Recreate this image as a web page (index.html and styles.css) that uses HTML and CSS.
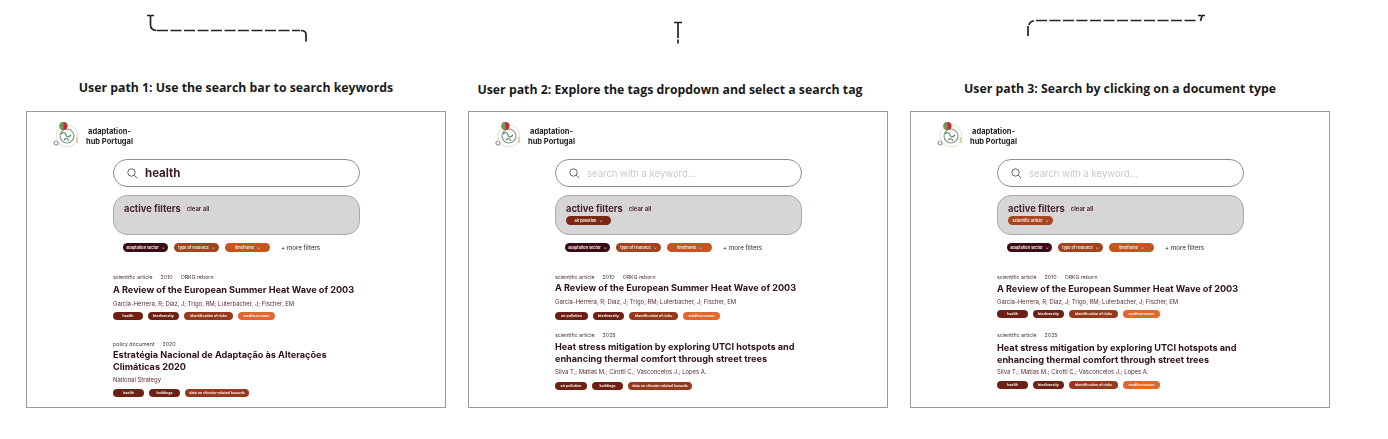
FILE: index.html
```html
<!DOCTYPE html>
<html lang="en">
<head>
  <meta charset="utf-8">
  <title>User paths</title>
  <link rel="stylesheet" href="styles.css">
</head>
<body>
  <svg class="connectors" width="1388" height="52" viewBox="0 0 1388 52">
    <g fill="none" stroke="#222" stroke-width="1.700">
      <path d="M147 15.500h7M150.500 16v9q0 5 6 5.500"/>
      <path d="M157 30.500H300" stroke-dasharray="11 2.500"/>
      <path d="M301 30.500q5 0 5 4v7"/>
      <path d="M674 22.500h8M678 23v15M678 39.500v4"/>
      <path d="M1028 36v-10"/>
      <path d="M1029 25q1-4 5-4"/>
      <path d="M1036 20.500H1196" stroke-dasharray="11 2.500"/>
      <path d="M1198 15.500h7M1202 16l-1.500 5"/>
    </g>
  </svg>

  <div class="paths">
    <section class="path path-1">
      <h2 class="path-title">User path 1: Use the search bar to search keywords</h2>
      <div class="frame">
        <header class="brand">
          <svg class="logo" width="28" height="28" viewBox="0 0 28 28">
            <circle cx="15" cy="15" r="11" fill="none" stroke="#d5e6cc" stroke-width="1"/>
            <circle cx="15" cy="15" r="7" fill="none" stroke="#7f9a84" stroke-width="1.200"/>
            <path d="M9 13q4-3 5 1t5 0M12 19q3-3 5 1" fill="none" stroke="#5f8a6a" stroke-width="1.200"/>
            <circle cx="11.500" cy="5" r="4" fill="#c8282a"/>
            <path d="M11.500 1a4 4 0 0 0 0 8z" fill="#6d9a5c"/>
            <circle cx="4" cy="22" r="2" fill="none" stroke="#9a9a9a" stroke-width="1.200"/>
            <rect x="24" y="16" width="2" height="6" rx="1" fill="#e8c9a8"/>
          </svg>
          <p class="brand-name">adaptation-<br>hub Portugal</p>
        </header>
        <div class="search">
          <svg class="search-icon" width="11" height="11" viewBox="0 0 11 11"><circle cx="4.500" cy="4.500" r="3.700" fill="none" stroke="#555" stroke-width=".9"/><path d="M7.200 7.200l3 3" stroke="#555" stroke-width=".9"/></svg>
          <span class="search-value">health</span>
        </div>
        <div class="filters">
          <div class="filters-head"><b class="filters-title">active filters</b><span class="clear-all">clear all</span></div>
        </div>
        <div class="chips">
          <span class="chip chip-sector">adaptation sector <i>&#8964;</i></span>
          <span class="chip chip-type">type of resource <i>&#8964;</i></span>
          <span class="chip chip-time">timeframe <i>&#8964;</i></span>
          <span class="more">+ more filters</span>
        </div>
        <article class="result">
          <p class="meta"><span>scientific article</span><span>2010</span><span>ORKG reborn</span></p>
          <h3 class="result-title">A Review of the European Summer Heat Wave of 2003</h3>
          <p class="authors">Garcia-Herrera, R; Díaz, J; Trigo, RM; Luterbacher, J; Fischer, EM</p>
          <div class="tags">
            <span class="tag tag-w30">health</span>
            <span class="tag tag-w31">biodiversity</span>
            <span class="tag tag-mid tag-w49">identification of risks</span>
            <span class="tag tag-light tag-w37">mediterranean</span>
          </div>
        </article>
        <article class="result">
          <p class="meta"><span>policy document</span><span>2020</span></p>
          <h3 class="result-title">Estratégia Nacional de Adaptação às Alterações<br>Climáticas 2020</h3>
          <p class="authors">National Strategy</p>
          <div class="tags">
            <span class="tag tag-w31">health</span>
            <span class="tag tag-w31">buildings</span>
            <span class="tag tag-mid tag-w64">data on climate-related hazards</span>
          </div>
        </article>
      </div>
    </section>

    <section class="path path-2">
      <h2 class="path-title">User path 2: Explore the tags dropdown and select a search tag</h2>
      <div class="frame">
        <header class="brand">
          <svg class="logo" width="28" height="28" viewBox="0 0 28 28">
            <circle cx="15" cy="15" r="11" fill="none" stroke="#d5e6cc" stroke-width="1"/>
            <circle cx="15" cy="15" r="7" fill="none" stroke="#7f9a84" stroke-width="1.200"/>
            <path d="M9 13q4-3 5 1t5 0M12 19q3-3 5 1" fill="none" stroke="#5f8a6a" stroke-width="1.200"/>
            <circle cx="11.500" cy="5" r="4" fill="#c8282a"/>
            <path d="M11.500 1a4 4 0 0 0 0 8z" fill="#6d9a5c"/>
            <circle cx="4" cy="22" r="2" fill="none" stroke="#9a9a9a" stroke-width="1.200"/>
            <rect x="24" y="16" width="2" height="6" rx="1" fill="#e8c9a8"/>
          </svg>
          <p class="brand-name">adaptation-<br>hub Portugal</p>
        </header>
        <div class="search">
          <svg class="search-icon" width="11" height="11" viewBox="0 0 11 11"><circle cx="4.500" cy="4.500" r="3.700" fill="none" stroke="#555" stroke-width=".9"/><path d="M7.200 7.200l3 3" stroke="#555" stroke-width=".9"/></svg>
          <span class="search-hint">search with a keyword...</span>
        </div>
        <div class="filters">
          <div class="filters-head"><b class="filters-title">active filters</b><span class="clear-all">clear all</span></div>
          <span class="chip chip-active">air pollution <i>&#8964;</i></span>
        </div>
        <div class="chips">
          <span class="chip chip-sector">adaptation sector <i>&#8964;</i></span>
          <span class="chip chip-type">type of resource <i>&#8964;</i></span>
          <span class="chip chip-time">timeframe <i>&#8964;</i></span>
          <span class="more">+ more filters</span>
        </div>
        <article class="result">
          <p class="meta"><span>scientific article</span><span>2010</span><span>ORKG reborn</span></p>
          <h3 class="result-title">A Review of the European Summer Heat Wave of 2003</h3>
          <p class="authors">Garcia-Herrera, R; Díaz, J; Trigo, RM; Luterbacher, J; Fischer, EM</p>
          <div class="tags">
            <span class="tag tag-w33">air pollution</span>
            <span class="tag tag-w31">biodiversity</span>
            <span class="tag tag-mid tag-w49">identification of risks</span>
            <span class="tag tag-light tag-w37">mediterranean</span>
          </div>
        </article>
        <article class="result">
          <p class="meta"><span>scientific article</span><span>2025</span></p>
          <h3 class="result-title">Heat stress mitigation by exploring UTCI hotspots and<br>enhancing thermal comfort through street trees</h3>
          <p class="authors">Silva T.; Matias M.; Cirotti C.; Vasconcelos J.; Lopes A.</p>
          <div class="tags">
            <span class="tag tag-w32">air pollution</span>
            <span class="tag tag-w31">buildings</span>
            <span class="tag tag-mid tag-w64">data on climate-related hazards</span>
          </div>
        </article>
      </div>
    </section>

    <section class="path path-3">
      <h2 class="path-title">User path 3: Search by clicking on a document type</h2>
      <div class="frame">
        <header class="brand">
          <svg class="logo" width="28" height="28" viewBox="0 0 28 28">
            <circle cx="15" cy="15" r="11" fill="none" stroke="#d5e6cc" stroke-width="1"/>
            <circle cx="15" cy="15" r="7" fill="none" stroke="#7f9a84" stroke-width="1.200"/>
            <path d="M9 13q4-3 5 1t5 0M12 19q3-3 5 1" fill="none" stroke="#5f8a6a" stroke-width="1.200"/>
            <circle cx="11.500" cy="5" r="4" fill="#c8282a"/>
            <path d="M11.500 1a4 4 0 0 0 0 8z" fill="#6d9a5c"/>
            <circle cx="4" cy="22" r="2" fill="none" stroke="#9a9a9a" stroke-width="1.200"/>
            <rect x="24" y="16" width="2" height="6" rx="1" fill="#e8c9a8"/>
          </svg>
          <p class="brand-name">adaptation-<br>hub Portugal</p>
        </header>
        <div class="search">
          <svg class="search-icon" width="11" height="11" viewBox="0 0 11 11"><circle cx="4.500" cy="4.500" r="3.700" fill="none" stroke="#555" stroke-width=".9"/><path d="M7.200 7.200l3 3" stroke="#555" stroke-width=".9"/></svg>
          <span class="search-hint">search with a keyword...</span>
        </div>
        <div class="filters">
          <div class="filters-head"><b class="filters-title">active filters</b><span class="clear-all">clear all</span></div>
          <span class="chip chip-active chip-type">scientific article <i>&#8964;</i></span>
        </div>
        <div class="chips">
          <span class="chip chip-sector">adaptation sector <i>&#8964;</i></span>
          <span class="chip chip-type">type of resource <i>&#8964;</i></span>
          <span class="chip chip-time">timeframe <i>&#8964;</i></span>
          <span class="more">+ more filters</span>
        </div>
        <article class="result">
          <p class="meta"><span>scientific article</span><span>2010</span><span>ORKG reborn</span></p>
          <h3 class="result-title">A Review of the European Summer Heat Wave of 2003</h3>
          <p class="authors">Garcia-Herrera, R; Díaz, J; Trigo, RM; Luterbacher, J; Fischer, EM</p>
          <div class="tags">
            <span class="tag tag-w31">health</span>
            <span class="tag tag-w31">biodiversity</span>
            <span class="tag tag-mid tag-w49">identification of risks</span>
            <span class="tag tag-light tag-w37">mediterranean</span>
          </div>
        </article>
        <article class="result">
          <p class="meta"><span>scientific article</span><span>2025</span></p>
          <h3 class="result-title">Heat stress mitigation by exploring UTCI hotspots and<br>enhancing thermal comfort through street trees</h3>
          <p class="authors">Silva T.; Matias M.; Cirotti C.; Vasconcelos J.; Lopes A.</p>
          <div class="tags">
            <span class="tag tag-w31">health</span>
            <span class="tag tag-w31">biodiversity</span>
            <span class="tag tag-mid tag-w49">identification of risks</span>
            <span class="tag tag-light tag-w37">mediterranean</span>
          </div>
        </article>
      </div>
    </section>
  </div>
</body>
</html>
```

FILE: styles.css
```css
* {
  box-sizing: border-box;
}

body {
  margin: 0;
  background: #fff;
  font-family: Inter, "Liberation Sans", sans-serif;
  color: #33141a;
}

p, h2, h3 {
  margin: 0;
}

.connectors {
  display: block;
}

.paths {
  display: grid;
  grid-template-columns: repeat(3, 420px);
  gap: 22px;
  padding-left: 26px;
}

.path-title {
  height: 59px;
  padding-top: 27px;
  font-family: "Open Sans", sans-serif;
  font-size: 12.300px;
  line-height: 18px;
  font-weight: 700;
  color: #1a1a1a;
  text-align: center;
  white-space: nowrap;
}

.path-2 .path-title {
  padding-top: 29px;
  padding-right: 16px;
}

.path-3 .path-title {
  padding-top: 28px;
}

.frame {
  height: 297px;
  padding: 9px 0 0 86px;
  border: 1px solid #9a9a9a;
  filter: blur(.35px);
}

.brand {
  display: flex;
  align-items: center;
  height: 28px;
  margin-left: -61px;
}

.logo {
  flex: none;
}

.brand-name {
  margin: 4px 0 0 6px;
  font-size: 7.500px;
  line-height: 10px;
  font-weight: 700;
  color: #222;
  text-align: center;
}

.search {
  display: flex;
  align-items: center;
  width: 247px;
  height: 28px;
  margin-top: 10px;
  padding-left: 13px;
  border: 1px solid #8d8d8d;
  border-radius: 14px;
}

.search-icon {
  flex: none;
}

.search-value {
  margin-left: 7px;
  font-size: 11.500px;
  font-weight: 700;
  color: #3c1a20;
}

.search-hint {
  margin-left: 7px;
  font-size: 9.500px;
  color: #c9c9c9;
}

.filters {
  width: 247px;
  height: 40px;
  margin-top: 8px;
  padding: 6px 10px 0;
  background: #d6d6d6;
  border: 1px solid #b3a69e;
  border-radius: 14px;
}

.filters-head {
  display: flex;
  align-items: center;
  height: 12px;
  margin-bottom: 2px;
}

.filters-title {
  font-size: 9.300px;
  font-weight: 700;
  color: #4a2230;
}

.clear-all {
  margin-left: 6px;
  font-size: 6px;
  font-weight: 600;
  color: #4a1c24;
}

.chips {
  display: flex;
  align-items: center;
  gap: 6px;
  margin: 8px 0 0 10px;
}

.chip {
  display: flex;
  flex: none;
  align-items: center;
  justify-content: center;
  gap: 3px;
  width: 45px;
  height: 9px;
  border-radius: 5px;
  font-size: 3.800px;
  font-weight: 700;
  color: #f3e3dc;
  white-space: nowrap;
}

.chip i {
  font-style: normal;
  line-height: 3px;
}

.chip-sector {
  background: #3b0a16;
}

.chip-type {
  background: #a1431f;
}

.chip-time {
  background: #c9521f;
}

.chip-active {
  background: #7a2814;
}

.chip-active.chip-type {
  background: #a8471f;
}

.more {
  margin-left: 5px;
  font-size: 6.200px;
  color: #33202a;
  white-space: nowrap;
}

.result {
  margin-top: 22px;
}

.result + .result {
  margin-top: 21px;
}

.path-2 .result + .result {
  margin-top: 12px;
}

.path-3 .result + .result {
  margin-top: 14px;
}

.meta {
  display: flex;
  gap: 8px;
  height: 6px;
  font-size: 5.300px;
  line-height: 6px;
  color: #4b3036;
}

.result-title {
  margin-top: 4px;
  font-size: 9.150px;
  line-height: 12px;
  font-weight: 700;
  color: #2e1218;
  white-space: nowrap;
}

.result + .result .result-title {
  margin-top: 2px;
}

.path-2 .result-title {
  margin-top: 2px;
}

.path-3 .result-title {
  margin-top: 3px;
}

.path-2 .result + .result .result-title {
  margin-top: 3px;
}

.path-3 .result + .result .result-title {
  margin-top: 4px;
}

.authors {
  margin-top: 4px;
  font-size: 5.900px;
  line-height: 8px;
  color: #5a2c2c;
  white-space: nowrap;
}

.result + .result .authors {
  margin-top: 3px;
}

.path-3 .authors {
  margin-top: 3px;
}

.path-3 .result + .result .authors {
  margin-top: 2px;
}

.tags {
  display: flex;
  gap: 5px;
  margin-top: 4px;
}

.path-2 .tags {
  margin-top: 6px;
}

.path-3 .tags {
  margin-top: 4px;
}

.result + .result .tags {
  margin-top: 5px;
}

.path-2 .result + .result .tags {
  margin-top: 6px;
}

.tag {
  display: flex;
  align-items: center;
  justify-content: center;
  height: 8px;
  border-radius: 4px;
  background: #6e2014;
  font-size: 3.600px;
  font-weight: 700;
  color: #f5e6df;
  white-space: nowrap;
}

.tag-mid {
  background: #97391d;
}

.tag-light {
  background: #e2672f;
}

.tag-w30 { width: 30px; }
.tag-w31 { width: 31px; }
.tag-w32 { width: 32px; }
.tag-w33 { width: 33px; }
.tag-w37 { width: 37px; }
.tag-w49 { width: 49px; }
.tag-w64 { width: 64px; }
```
